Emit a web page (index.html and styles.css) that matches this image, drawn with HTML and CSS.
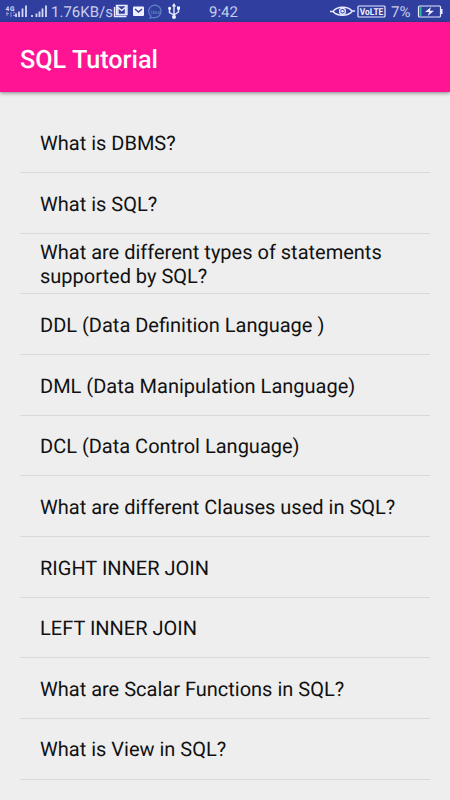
FILE: index.html
```html
<!DOCTYPE html>
<html lang="en">
<head>
<meta charset="utf-8">
<title>SQL Tutorial</title>
<link rel="stylesheet" href="styles.css">
</head>
<body>
<div class="status">
  <svg class="signals" width="46" height="22" viewBox="0 0 46 22">
    <text class="tiny" x="0.5" y="10.5" textLength="9">4G</text>
    <path class="dim" d="M2 12v4M1 13.5h3M6 12v5M8 13l2-1M8 15.5h2"/>
    <path class="bars" d="M11 13.5V17M14 11.5V17M17.500 8.5V17M21 5.5V17M27 15V17M31.500 13.5V17M34.500 11.5V17M37.500 8.500V17M41 5.500V17"/>
  </svg>
  <span class="speed">1.76KB/s</span>
  <svg class="notices" width="68" height="22" viewBox="0 0 68 22">
    <path class="line" d="M1.500 7v9.500h12M3.500 5.500h10.500v9h-10.500zM3.500 6l5.200 4.500 5.200-4.500M5 7v7M12.500 7v7"/>
    <rect class="solid" x="20" y="6.500" width="11" height="9.500" rx="1"/>
    <path class="envelope" d="M22 9l3.500 3L29 9"/>
    <path class="imo" d="M38 16.200a6.200 6.200 0 1 1 3 1.300l-4 .5z"/>
    <text class="imo-text" x="38" y="13.500" textLength="9.500">imo</text>
    <path class="usb" d="M61 5v12M56.500 8.500v4l4.500 2.500 4.500-3V8"/>
    <path class="solid" d="M58.800 6.500L61 3l2.200 3.500zM64 6.500h3v3h-3zM55 8.300a1.600 1.600 0 1 0 3.200 0 1.600 1.600 0 1 0-3.200 0M59 17a2 2 0 1 0 4 0 2 2 0 1 0-4 0"/>
  </svg>
  <span class="clock">9:42</span>
  <svg class="eye" width="26" height="22" viewBox="0 0 26 22">
    <path class="line" d="M0 11.500h3C7 6 18 6 22 11h3M3 11.500c4 5 15 5 19 0"/>
    <circle class="line" cx="12.500" cy="11.300" r="2.900"/>
    <circle class="solid" cx="12.500" cy="11.300" r="1.300"/>
  </svg>
  <svg class="volte" width="30" height="22" viewBox="0 0 30 22">
    <rect class="frame" x="2" y="6" width="27" height="11" rx="1"/>
    <text class="volte-text" x="3.800" y="15" textLength="23.500" lengthAdjust="spacingAndGlyphs">VoLTE</text>
  </svg>
  <span class="percent">7%</span>
  <svg class="battery" width="28" height="22" viewBox="0 0 28 22">
    <rect class="frame" x="1.500" y="6" width="22" height="11" rx="1"/>
    <path class="solid" d="M24 9h1.500v5H24z"/>
    <path class="charge" d="M2.500 7h2v9h-2z"/>
    <path class="solid" d="M14 7l-6 5h4.200l-1.500 4 6.300-5.200h-4.200z"/>
  </svg>
</div>
<header class="appbar"><h1>SQL Tutorial</h1></header>
<ul class="topics">
  <li>What is DBMS?</li>
  <li>What is SQL?</li>
  <li>What are different types of statements supported by SQL?</li>
  <li>DDL (Data Definition Language )</li>
  <li>DML (Data Manipulation Language)</li>
  <li>DCL (Data Control Language)</li>
  <li>What are different Clauses used in SQL?</li>
  <li>RIGHT INNER JOIN</li>
  <li>LEFT INNER JOIN</li>
  <li>What are Scalar Functions in SQL?</li>
  <li>What is View in SQL?</li>
</ul>
</body>
</html>
```
FILE: styles.css
```css
* { box-sizing: border-box; }
body {
  margin: 0;
  height: 800px;
  overflow: hidden;
  background: #eee;
  color: #111;
  font-family: Roboto, sans-serif;
  text-rendering: geometricPrecision;
}
.status {
  display: flex;
  height: 22px;
  padding-left: 5px;
  background: #303f9f;
  color: #c9cdea;
  font-size: 15px;
  line-height: 24px;
  white-space: nowrap;
}
.status svg, .status span { flex: none; }
.speed { width: 62px; }
.notices { width: 68px; }
.clock { width: 121px; padding-left: 28px; }
.eye { margin-left: 28px; }
.percent { width: 26px; margin-left: 5px; }
.line, .usb, .frame { fill: none; stroke: #e8eaff; stroke-width: 1.4; }
.frame { stroke-width: 1.2; }
.bars { stroke: #d5d8f2; stroke-width: 1.8; }
.dim { stroke: #8f98cf; stroke-width: 1; }
.solid { fill: #f0f1ff; }
.envelope { fill: none; stroke: #303f9f; stroke-width: 1.5; }
.imo { fill: none; stroke: #6086c4; stroke-width: 1.2; }
.charge { fill: #29b6a5; }
.tiny { fill: #dfe2fa; font-size: 6.5px; font-weight: 700; }
.imo-text { fill: #6086c4; font-size: 5px; font-weight: 700; }
.volte-text { fill: #f0f1ff; font-size: 9.5px; font-weight: 700; }
.appbar {
  display: flex;
  align-items: center;
  height: 70px;
  padding: 7px 20px 0;
  background: #ff1493;
  box-shadow: 0 1px 4px rgba(0, 0, 0, .45);
}
.appbar h1 {
  margin: 0;
  color: #fff;
  font-size: 25.200px;
  font-weight: 500;
  line-height: 30px;
}
.topics {
  margin: 20.400px 20px 0;
  padding: 0;
  list-style: none;
}
.topics li {
  display: flex;
  align-items: center;
  height: 60.660px;
  padding: 1.400px 20px 0;
  border-bottom: 1px solid #d9d9d9;
  font-size: 20px;
  line-height: 24px;
}
```
